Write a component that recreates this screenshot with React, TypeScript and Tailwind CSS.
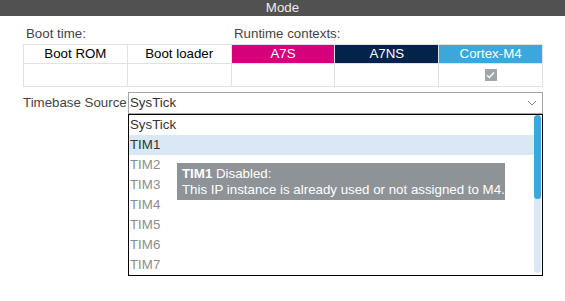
const items = ['SysTick', 'TIM1', 'TIM2', 'TIM3', 'TIM4', 'TIM5', 'TIM6', 'TIM7'];

export default function App() {
  return (
    <div className="w-[565px] h-[301px] bg-white text-[13.3px] font-['Liberation_Sans',Arial,sans-serif]">
      <div className="h-4 bg-[#505150] text-center leading-4 text-[#ececec]">Mode</div>

      <div className="pl-[23px] pr-[22px]">
        <div className="mt-[10px] grid h-4 grid-cols-5 leading-4 text-[#444]">
          <span className="pl-[3px]">Boot time:</span>
          <span />
          <span className="col-span-3 pl-[3px]">Runtime contexts:</span>
        </div>

        <div className="mt-[2px] grid grid-cols-5 border-t border-l border-[#e2e2e2] text-center">
          <div className="h-[19px] border-r border-b border-[#e2e2e2] leading-[18px] text-black">Boot ROM</div>
          <div className="h-[19px] border-r border-b border-[#e2e2e2] leading-[18px] text-black">Boot loader</div>
          <div className="h-[19px] border-r border-b border-[#e2e2e2] bg-[#d5007b] leading-[18px] text-white">A7S</div>
          <div className="h-[19px] border-r border-b border-[#e2e2e2] bg-[#03234b] leading-[18px] text-white">A7NS</div>
          <div className="h-[19px] border-r border-b border-[#e2e2e2] bg-[#3ba8dd] leading-[18px] text-white">Cortex-M4</div>
          <div className="h-[23px] border-r border-b border-[#e2e2e2]" />
          <div className="h-[23px] border-r border-b border-[#e2e2e2]" />
          <div className="h-[23px] border-r border-b border-[#e2e2e2]" />
          <div className="h-[23px] border-r border-b border-[#e2e2e2]" />
          <div className="flex h-[23px] items-center justify-center border-r border-b border-[#e2e2e2]">
            <span className="flex h-3 w-3 items-center justify-center bg-[#a2a5a8]">
              <svg width="9" height="8" viewBox="0 0 9 8" fill="none">
                <path d="M1 4.2 L3.4 6.5 L8 1.5" stroke="#fff" strokeWidth="1.3" />
              </svg>
            </span>
          </div>
        </div>

        <div className="mt-[5px] flex items-center">
          <span className="w-[105px] text-[#444]">Timebase Source</span>
          <div className="flex h-[22px] flex-1 items-center border border-[#a5a5a5] pl-[1px] pr-[5px] text-[#333]">
            <span className="flex-1">SysTick</span>
            <svg width="10" height="6" viewBox="0 0 10 6" fill="none">
              <path d="M1 1 L5 5 L9 1" stroke="#888" strokeWidth="1" />
            </svg>
          </div>
        </div>

        <div className="relative ml-[105px] flex h-[162px] border border-black">
          <ul className="flex-1">
            {items.map((item, i) => (
              <li
                key={item}
                className={`h-5 pl-[1px] leading-5 ${
                  i === 1 ? 'bg-[#dae8f5] text-[#333]' : i === 0 ? 'text-[#333]' : 'text-[#8c8c8c]'
                }`}
              >
                {item}
              </li>
            ))}
          </ul>
          <div className="mr-[1px] h-[158px] w-[7px] rounded-[4px] bg-[#dae8f5]">
            <div className="h-[84px] rounded-[4px] bg-[#3ba8dd]" />
          </div>

          <div className="absolute top-[48px] left-[48px] h-[37px] w-[328px] bg-[#8e9398] pt-[3px] pl-[5px] leading-4 text-white">
            <div>
              <b>TIM1</b> Disabled:
            </div>
            <div>This IP instance is already used or not assigned to M4.</div>
          </div>
        </div>
      </div>
    </div>
  );
}
